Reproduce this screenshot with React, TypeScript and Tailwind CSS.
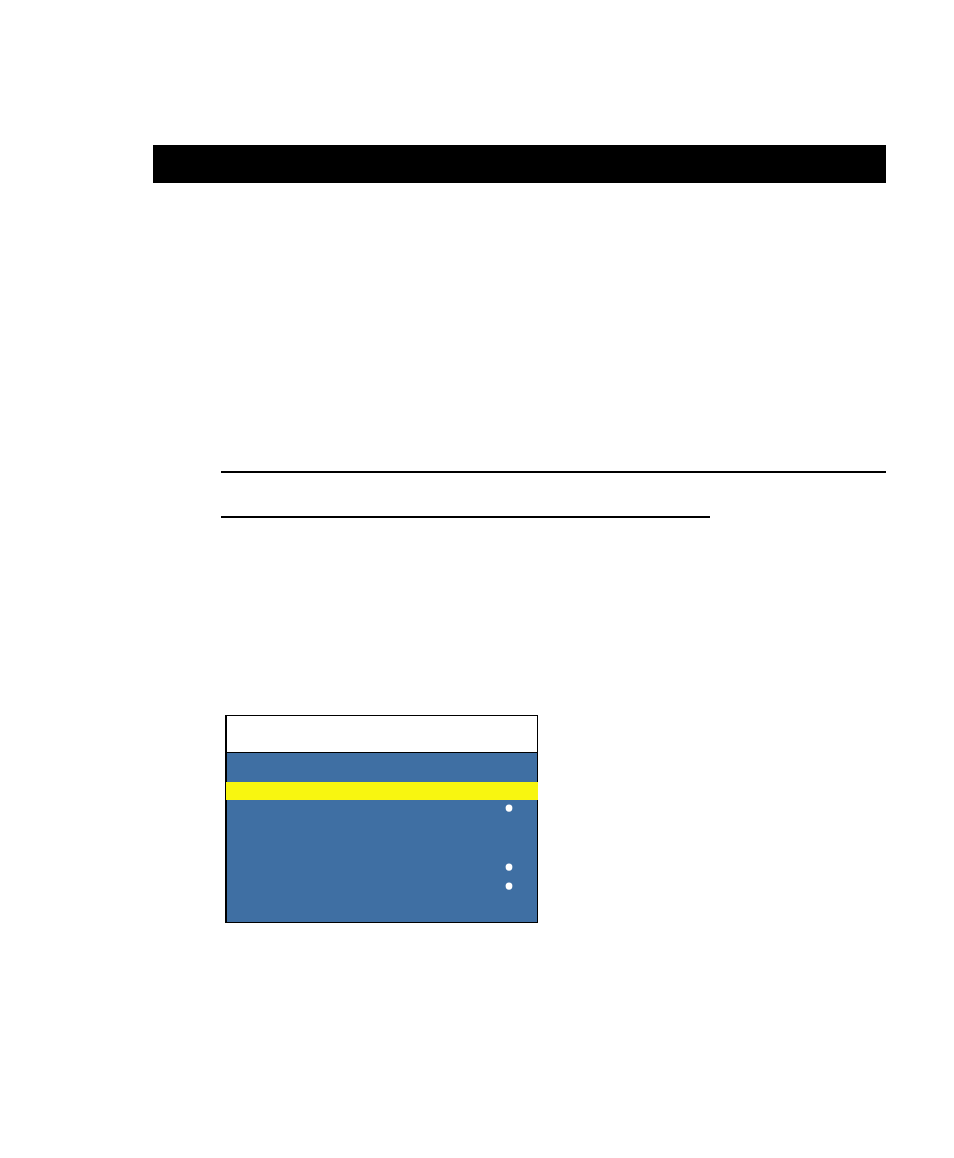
const Dot = () => (
  <svg className="block h-2 w-2" viewBox="0 0 8 8" aria-hidden="true">
    <ellipse cx="4" cy="4.1" rx="3.4" ry="3.6" fill="#fff" />
  </svg>
)

export default function App() {
  return (
    <main className="min-h-screen bg-white pt-[145px] pr-[68px] pb-10 pl-[153px]">
      <header className="h-[38px] bg-black" />

      <div className="pl-[68px]">
        {/* Rules */}
        <section className="flex flex-col gap-[43px] pt-72">
          <hr className="w-full border-t-2 border-black" />
          <hr className="w-full max-w-[489px] border-t-2 border-black" />
        </section>

        {/* Menu panel */}
        <section className="mt-[197px] ml-1 max-w-[313px] border border-l-2 border-black bg-[#3f6fa3]">
          <div className="h-[37px] border-b border-black bg-white" />
          <div className="h-[29px]" />

          {/* Highlighted row, drawn over the panel border */}
          <div className="-mx-px h-[18px] bg-[#f8f610]" />

          <div className="flex flex-col items-end pt-1 pr-6 pb-8">
            <Dot />
            <div className="flex flex-col gap-[11px] pt-[51px]">
              <Dot />
              <Dot />
            </div>
          </div>
        </section>
      </div>
    </main>
  )
}
